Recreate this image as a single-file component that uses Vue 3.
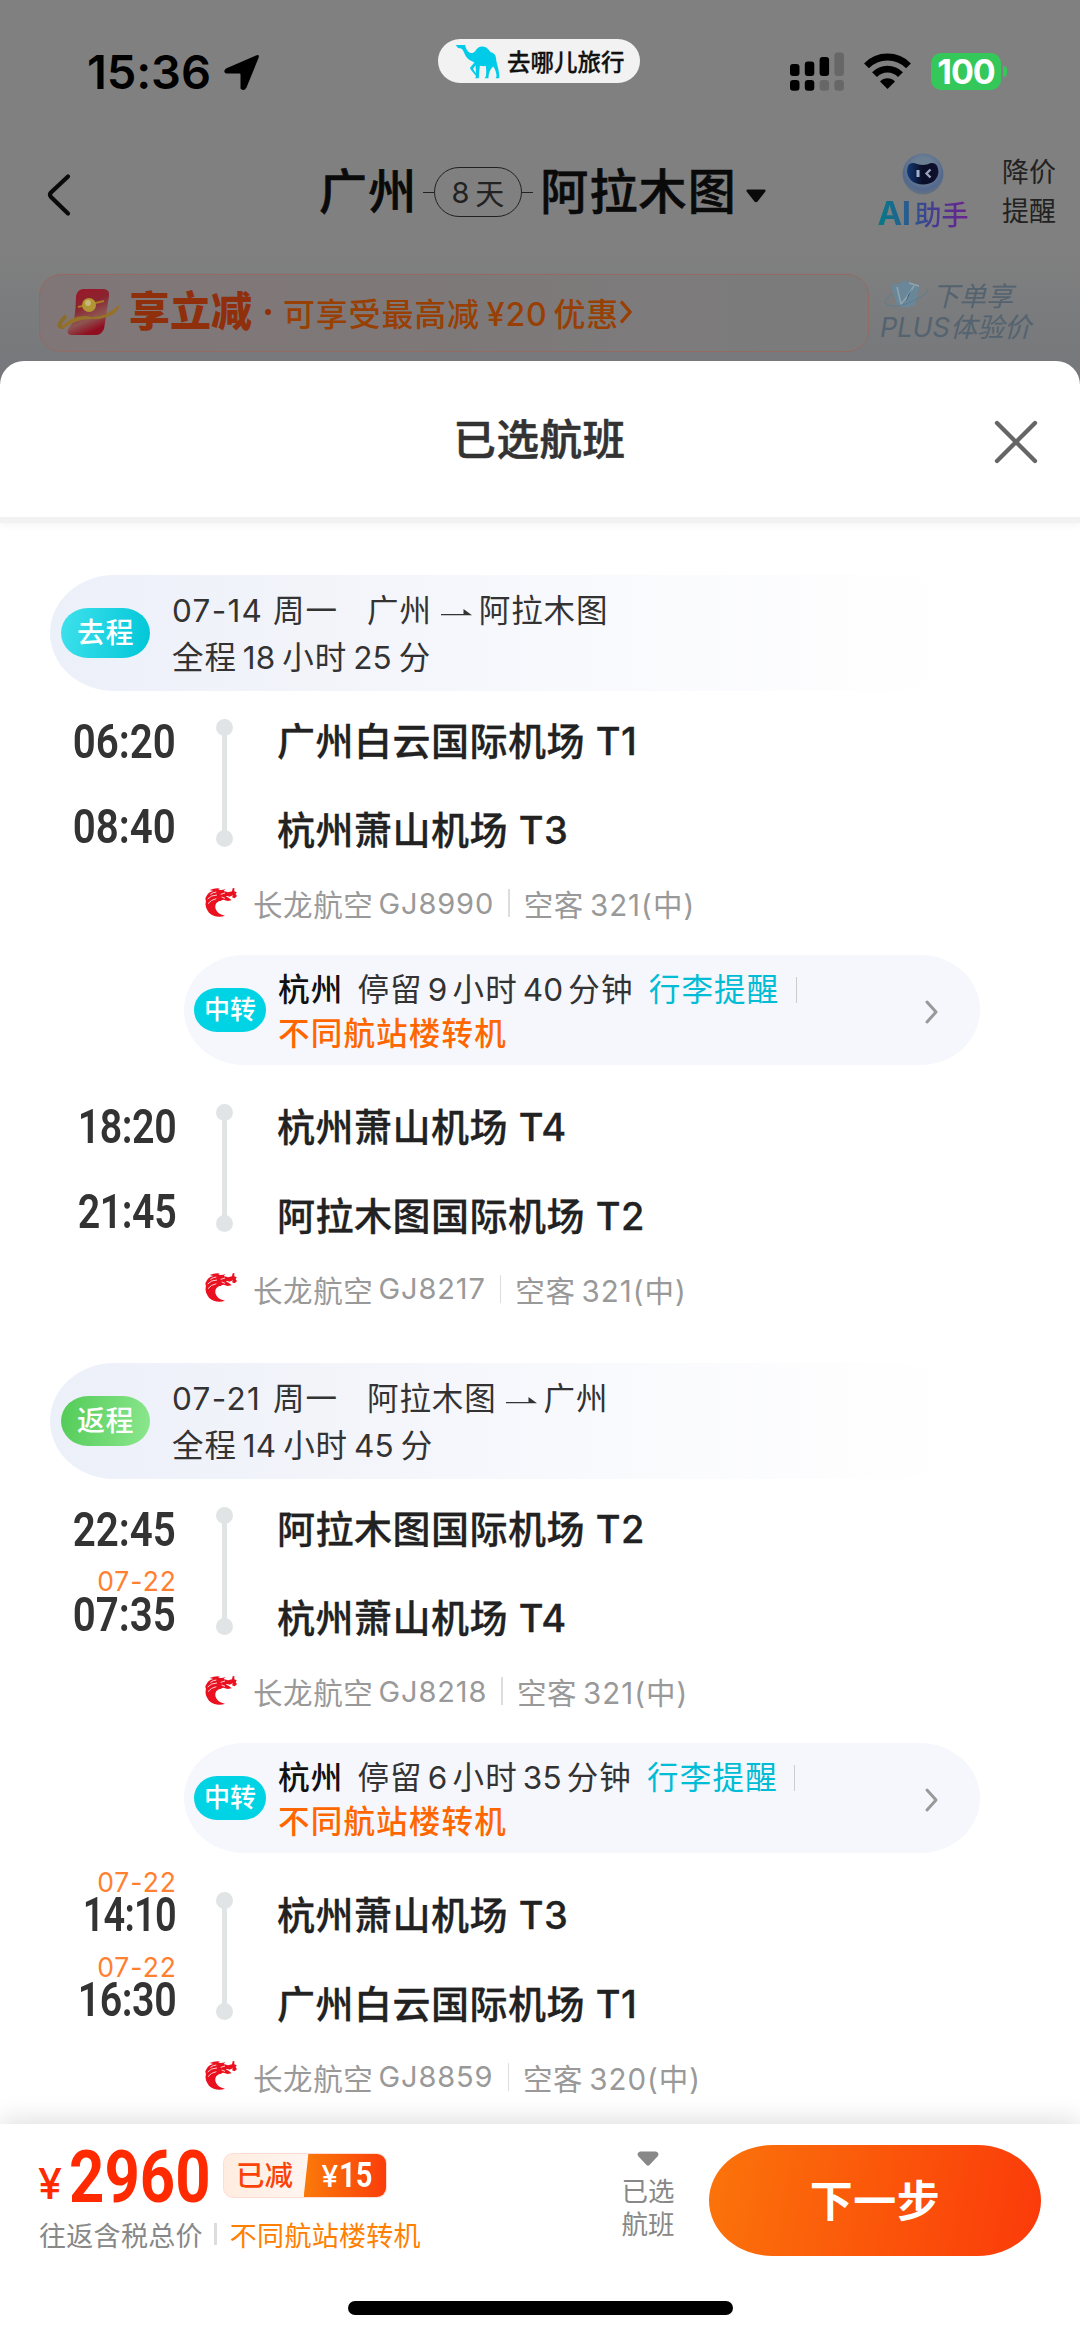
<script setup>
const trips = [
  {
    kind: 'go', tag: '去程', date: '07-14', day: '周一', from: '广州', to: '阿拉木图', h: '18', m: '25',
    legs: [
      {
        times: [{ t: '06:20' }, { t: '08:40' }], airports: ['广州白云国际机场 T1', '杭州萧山机场 T3'],
        flight: 'GJ8990', plane: '321', transfer: { h: '9', m: '40' },
      },
      {
        times: [{ t: '18:20' }, { t: '21:45' }], airports: ['杭州萧山机场 T4', '阿拉木图国际机场 T2'],
        flight: 'GJ8217', plane: '321',
      },
    ],
  },
  {
    kind: 'back', tag: '返程', date: '07-21', day: '周一', from: '阿拉木图', to: '广州', h: '14', m: '45',
    legs: [
      {
        times: [{ t: '22:45' }, { t: '07:35', d: '07-22' }], airports: ['阿拉木图国际机场 T2', '杭州萧山机场 T4'],
        flight: 'GJ8218', plane: '321', transfer: { h: '6', m: '35' },
      },
      {
        times: [{ t: '14:10', d: '07-22' }, { t: '16:30', d: '07-22' }], airports: ['杭州萧山机场 T3', '广州白云国际机场 T1'],
        flight: 'GJ8859', plane: '320',
      },
    ],
  },
]

const ones = (t) => 'ones' + (t.split('1').length - 1)
</script>

<template>
  <div class="page">
    <header class="backdrop">
      <div class="status">
        <span class="clock">15:36</span>
        <svg class="loc" viewBox="0 0 36 37"><path d="M32 1.500Q36 0 34.500 4L22.500 33.500Q20 38 16.500 34.500V20.500Q16.500 19.500 15.500 19.500L2 19.500Q-1.500 17.500 2 14.500Z" /></svg>
        <div class="brand">
          <svg viewBox="0 0 132 106" preserveAspectRatio="none"><path fill="#00cbe8" fill-rule="evenodd" d="M2 3H30L31 9C36 26 50 33 59 22C67 8 76 6 84 8C96 10 99 18 104 24C117 28 121 36 121 50C124 66 130 78 130 104H119L122 98C121 84 118 76 112 68C104 76 99 84 98 104H87L91 97C92 86 92 76 90 66C84 68 78 67 73 66C72 78 70 90 70 104H59L62 98L46 77L44 72L57 56C46 50 36 46 30 34C26 26 24 17 18 14L9 12ZM53 76L60 64L62 90Z" /></svg>
          <span>去哪儿旅行</span>
        </div>
        <svg class="signal" viewBox="0 0 54 39">
          <g fill="#000"><rect x="0" y="12" width="9.500" height="12" rx="3" /><rect x="14.800" y="9.500" width="9.500" height="14.500" rx="3" /><rect x="29.600" y="5" width="9.500" height="19" rx="3" /><rect x="0" y="28" width="9.500" height="10.700" rx="3.200" /><rect x="14.800" y="28" width="9.500" height="10.700" rx="3.200" /></g>
          <g fill="#676767"><rect x="44.400" y="0.500" width="9.500" height="23.500" rx="3" /><rect x="29.600" y="28" width="9.500" height="10.700" rx="3.200" /><rect x="44.400" y="28" width="9.500" height="10.700" rx="3.200" /></g>
        </svg>
        <svg class="wifi" viewBox="0 0 47 35"><path d="M2.500 11.800A29.500 29.500 0 0 1 44.500 11.800M10.500 20.700A18 18 0 0 1 36.500 20.700" fill="none" stroke="#000" stroke-width="6.800" /><path d="M23.500 35L16 27.500A10.500 10.500 0 0 1 31 27.500Z" /></svg>
        <div class="battery">100</div>
        <i class="nub"></i>
      </div>

      <div class="nav">
        <svg class="back" viewBox="0 0 24 42"><path d="M21 2.500L4 18.500Q2 20.800 4 23L21 39.500" fill="none" stroke="#0a0a0a" stroke-width="4.200" stroke-linecap="round" /></svg>
        <div class="route">
          <span class="city c1">广州</span>
          <i class="dash"></i><span class="days"><span>8</span>天</span><i class="dash"></i>
          <span class="city c2">阿拉木图</span>
          <svg class="caret" viewBox="0 0 20 14"><path d="M1.500 0.500H18.500Q20.500 1 19 3L11.500 12.500Q10 14 8.500 12.500L1 3Q-0.500 1 1.500 0.500Z" fill="#0a0a0a" /></svg>
        </div>
        <div class="ai">
          <svg viewBox="0 0 42 44">
            <defs><radialGradient id="orb" cx=".5" cy=".38" r=".62"><stop offset=".45" stop-color="#6b7f93" /><stop offset=".8" stop-color="#54688e" /><stop offset="1" stop-color="#64747f" /></radialGradient><linearGradient id="visor"><stop offset="0" stop-color="#143a74" /><stop offset=".5" stop-color="#0a0d27" /><stop offset="1" stop-color="#10112c" /></linearGradient></defs>
            <circle cx="21" cy="22" r="20.500" fill="url(#orb)" />
            <path d="M12 11Q17 13 21 13Q25 13 29 11Q36 10 36.500 20Q35 32 21 32.500Q7 32 5 20Q5 10 12 11Z" fill="url(#visor)" />
            <path d="M16 18V25" stroke="#9db4cb" stroke-width="3" /><path d="M28.500 17.500L24.500 21.500L28.500 25.500" fill="none" stroke="#9aa4bd" stroke-width="2.300" />
          </svg>
          <span><b>AI</b>助手</span>
        </div>
        <div class="alert"><span>降价</span><span>提醒</span></div>
      </div>

      <div class="promos">
        <div class="coupon">
          <svg class="packet" viewBox="0 0 62 48">
            <defs><linearGradient id="red" x1="0" y1="0" x2=".4" y2="1"><stop offset="0" stop-color="#a01525" /><stop offset=".45" stop-color="#8a2430" /><stop offset=".75" stop-color="#8d5552" /><stop offset="1" stop-color="#900e20" /></linearGradient></defs>
            <path d="M8 28Q-4 40 6 39" fill="none" stroke="#8a6c2c" stroke-width="4" />
            <path d="M25 1H46Q52 2 51 8L46 41Q43 47 38 47H13Q8 46 10 41L16 33Q18 20 18 8Q19 2 25 1Z" fill="url(#red)" />
            <path d="M3 39Q16 25 34 29Q48 29 61 17Q62 22 54 27Q44 32 34 31Q18 31 6 40Z" fill="#96712a" />
            <path d="M20 19L46 13" stroke="#a87c22" stroke-width="2" /><circle cx="31" cy="17" r="7" fill="#b29634" /><circle cx="30" cy="15" r="3" fill="#c5b978" />
          </svg>
          <b>享立减</b><i class="pt"></i>
          <span class="deal">可享受最高减<em>¥20</em>优惠</span>
          <svg class="chev" viewBox="0 0 14 24"><path d="M2 1.500L11 12L2 22.500" fill="none" stroke="#983f04" stroke-width="3.400" /></svg>
        </div>
        <div class="plus">
          <div class="p1">
            <svg viewBox="0 0 46 28"><path d="M8 5L18 3L22 0L28 3L37 6L32 25L22 28L14 25Z" fill="#698799" /><path d="M14 7L18 24L23 18L31 6M26 3L36 6" fill="none" stroke="#91a4ae" stroke-width="1.500" /><path d="M25 15L23 22L29 9Z" fill="#365f82" /><path d="M9 14Q-2 21 4 25Q14 29 32 20Q48 12 44 9" fill="none" stroke="#5c7c90" stroke-width="1" /></svg>
            <span>下单享</span>
          </div>
          <span class="p2">PLUS体验价</span>
        </div>
      </div>
    </header>

    <main class="sheet">
      <div class="head">
        <h1>已选航班</h1>
        <svg class="close" viewBox="0 0 44 44"><path d="M3 3L41 41M41 3L3 41" stroke="#666" stroke-width="4.300" stroke-linecap="round" /></svg>
      </div>
      <div class="list">
        <section v-for="trip in trips" :key="trip.kind" class="trip">
          <div class="strip">
            <span class="tag" :class="trip.kind">{{ trip.tag }}</span>
            <div class="sum">
              <div class="ln"><span class="date">{{ trip.date }}</span><span class="day">{{ trip.day }}</span><span>{{ trip.from }}</span><svg class="arr" viewBox="0 0 31 8"><path d="M0 6.200H31L22.500 0V5H0Z" fill="#333" /></svg><span>{{ trip.to }}</span></div>
              <div class="ln">全程<em>{{ trip.h }}</em>小时<em>{{ trip.m }}</em>分</div>
            </div>
          </div>
          <div v-for="leg in trip.legs" :key="leg.flight" class="leg">
            <div class="stops">
              <div class="times">
                <div v-for="s in leg.times" :key="s.t" class="time"><span v-if="s.d" class="next">{{ s.d }}</span><span class="hm" :class="ones(s.t)">{{ s.t }}</span></div>
              </div>
              <div class="rail"><i></i><u></u><i></i></div>
              <div class="ports"><div v-for="a in leg.airports" :key="a">{{ a }}</div></div>
            </div>
            <div class="airline">
              <svg viewBox="0 0 96 90">
                <path fill="#ea1020" d="M2 46C8 30 24 28 40 30C54 33 52 43 44 42C33 45 29 55 32 66C36 77 46 84 60 86C46 92 24 90 12 77C4 67 0 56 2 46Z" />
                <path fill="#ea1020" d="M1 34Q8 15 25 12L14 9Q32 2 45 5L40 8Q50 11 61 6L56 12L69 16L81 13L83 4L88 3L88 13L95 16L92 22L96 27L89 34L81 31L84 25L73 29L68 27L62 28L72 33L80 40L68 42L55 38L48 40L43 32L25 31Q12 34 3 44Z" />
                <path d="M8 36Q18 24 36 24M16 22Q24 16 34 15M9 50Q18 38 34 35M47 22L60 18M50 30L60 34" stroke="#fff" stroke-width="2.400" fill="none" />
              </svg>
              <span>长龙航空</span><span class="no">{{ leg.flight }}</span><i></i><span>空客</span><span class="pl">{{ leg.plane }}(中)</span>
            </div>
            <div v-if="leg.transfer" class="transfer">
              <span class="mid">中转</span>
              <div class="info">
                <div class="ln"><b>杭州</b>停留<em>{{ leg.transfer.h }}</em>小时<em>{{ leg.transfer.m }}</em>分钟<span class="bag">行李提醒</span><i></i></div>
                <div class="ln warn">不同航站楼转机</div>
              </div>
              <svg class="more" viewBox="0 0 13 24"><path d="M2 2L11 12L2 22" fill="none" stroke="#999" stroke-width="3" stroke-linecap="round" stroke-linejoin="round" /></svg>
            </div>
          </div>
        </section>
      </div>
      <footer class="bar">
        <div class="pay">
          <div class="price">
            <span class="yen">¥</span><span class="amt"><span>2960</span></span>
            <div class="off"><span class="l">已减</span><span class="r"><span>¥</span><b>15</b></span></div>
          </div>
          <div class="note"><span>往返含税总价</span><i></i><span class="w">不同航站楼转机</span></div>
        </div>
        <div class="picked">
          <svg viewBox="0 0 22 16"><path d="M3 0.500H19Q23 2 20.500 5.500L12.500 14Q11 15.500 9.500 14L1.500 5.500Q-1 2 3 0.500Z" fill="#888" /></svg>
          <span>已选</span><span>航班</span>
        </div>
        <button class="next-btn">下一步</button>
        <i class="home"></i>
      </footer>
    </main>
  </div>
</template>

<style>
body { margin: 0; background: #fff; }
</style>

<style scoped>
.page, .page * { box-sizing: border-box; }
.page { width: 1080px; height: 2337px; overflow: hidden; background: linear-gradient(#808080 0, #808080 250px, #76787b 362px, #76787b 400px); font-family: Inter, "Noto Sans CJK SC", sans-serif; }
.page svg { display: block; flex: none; overflow: visible; }
i, em { font-style: normal; }
.backdrop { height: 361px; display: flex; flex-direction: column; }

.status { height: 144px; display: flex; align-items: flex-start; padding-left: 87px; }
.clock { width: 124px; font-size: 47px; line-height: 52px; margin-top: 46px; font-weight: 600; letter-spacing: -.1px; color: #000; white-space: nowrap; }
.loc { width: 36px; height: 37px; margin: 54px 0 0 13px; }
.brand { width: 202px; height: 44px; margin: 39px 0 0 178px; border-radius: 22px; background: #f2f2f2; display: flex; align-items: center; padding-left: 17px; gap: 7px; font-size: 23.500px; font-weight: 500; -webkit-text-stroke: .3px #111; color: #111; white-space: nowrap; }
.brand svg { width: 45px; height: 35px; }
.signal { width: 54px; height: 39px; margin: 52px 0 0 150px; }
.wifi { width: 47px; height: 35px; margin: 54px 0 0 20px; }
.battery { width: 70px; height: 37px; margin: 53px 0 0 20px; border-radius: 10px; background: #34c759; color: #fff; font-size: 34px; line-height: 37px; font-weight: 700; text-align: center; letter-spacing: -1px; }
.nub { width: 4px; height: 11px; margin: 66px 0 0 2px; background: #34c759; border-radius: 0 5px 5px 0; }

.nav { height: 96px; display: flex; align-items: center; }
.back { width: 24px; height: 42px; margin-left: 47px; margin-top: 5px; }
.route { display: flex; align-items: center; margin-left: 248px; width: 447px; color: #0a0a0a; }
.city { font-size: 48px; letter-spacing: 1.200px; line-height: 60px; white-space: nowrap; font-weight: 500; -webkit-text-stroke: .6px #0a0a0a; }
.c1 { width: 104px; }
.c2 { width: 197px; margin-left: 7px; }
.dash { width: 11px; height: 1px; background: #222; }
.days { width: 89px; height: 50px; border: 1.500px solid #222; border-radius: 25px; font-size: 29px; color: #222; display: flex; align-items: center; justify-content: center; gap: 6px; }
.caret { width: 20px; height: 14px; margin: 7px 0 0 9px; }
.ai { width: 92px; margin-left: 111px; display: flex; flex-direction: column; align-items: center; height: 80px; }
.ai svg { width: 42px; height: 44px; }
.ai span { font-size: 27px; line-height: 30px; margin-top: 2px; font-weight: 500; white-space: nowrap; background: linear-gradient(90deg, #057a88, #2a5a90 35%, #433d90 60%, #6c2090); -webkit-background-clip: text; background-clip: text; color: transparent; }
.ai b { font-size: 33px; line-height: 30px; margin-right: 4px; letter-spacing: -.5px; }
.alert { margin-left: 33px; display: flex; flex-direction: column; font-size: 27px; line-height: 39px; color: #222; white-space: nowrap; }

.promos { display: flex; margin: 34px 0 0 39px; }
.coupon { width: 830px; height: 78px; border: 1.500px solid #936b62; border-radius: 22px; background: linear-gradient(90deg, #807678, #7e7878 45%, #7d7b7c 75%, #7b7b7c); display: flex; align-items: center; padding: 0 0 2px 18px; color: #983f04; }
.packet { width: 62px; height: 48px; }
.coupon b { font-size: 41px; line-height: 50px; margin: -2px 0 0 9px; width: 124px; white-space: nowrap; color: #8f2f0c; font-weight: 900; }
.pt { width: 6px; height: 6px; border-radius: 3px; background: #8f2f0c; margin: 0 12px; }
.deal { font-size: 32px; letter-spacing: .8px; font-weight: 500; white-space: nowrap; }
.deal em { margin: 0 6px 0 7px; }
.chev { width: 14px; height: 24px; }
.plus { margin-left: 14px; color: #54636f; font-size: 27px; white-space: nowrap; padding-top: 3px; }
.p1 { display: flex; align-items: center; height: 34px; }
.p1 svg { width: 46px; height: 28px; }
.p1 span, .p2 { font-style: italic; }
.p1 span { margin-left: 3px; }
.p2 { display: block; line-height: 34px; margin-left: -3px; }

.sheet { height: 1976px; border-radius: 24px 24px 0 0; background: #fff; overflow: hidden; display: flex; flex-direction: column; }
.head { height: 162px; flex: none; border-bottom: 6px solid #f2f2f2; display: flex; justify-content: flex-end; align-items: center; padding-right: 42px; box-shadow: 0 3px 7px rgba(0, 0, 0, .04); }
.head h1 { flex: 1; margin: 2px 0 0; padding-left: 42px; text-align: center; font-size: 42.500px; line-height: 60px; font-weight: 500; -webkit-text-stroke: .6px #333; color: #333; letter-spacing: .6px; text-indent: 43px; }
.close { width: 44px; height: 44px; margin-top: 6px; }
.list { height: 1601px; flex: none; padding-top: 52px; }
.trip { height: 788px; }
.strip { margin-left: 50px; width: 910px; height: 116px; border-radius: 64px / 58px; background: linear-gradient(90deg, #ecf0f9, #f2f4fa 28%, #f8f9fd 55%, #fdfdfe 85%, #fff); display: flex; align-items: center; padding-left: 11px; }
.tag { width: 89px; height: 50px; border-radius: 27px / 25px; color: #fff; font-size: 28px; letter-spacing: .5px; line-height: 50px; text-align: center; font-weight: 500; }
.go.tag { background: linear-gradient(100deg, #3fe1ec, #00c6d8); }
.back.tag { margin: 0; background: linear-gradient(100deg, #52cb57, #8ce78e); }
.sum { margin: 2px 0 0 22px; color: #333; font-size: 31.500px; letter-spacing: .9px; }
.ln { height: 47px; line-height: 47px; display: flex; align-items: center; white-space: nowrap; }
.date { width: 101px; letter-spacing: 1.300px; }
.day { width: 94px; }
.arr { width: 31px; height: 8px; margin: 4px 7px 0 9px; }
.ln em { margin: 0 7px 0 6px; letter-spacing: .1px; }
.leg { padding-top: 5px; height: 385.500px; }
.stops { display: flex; height: 178px; }
.times { width: 176px; padding-top: 3px; }
.time { height: 85px; position: relative; display: flex; align-items: center; justify-content: flex-end; }
.hm { font-family: Roboto, sans-serif; font-size: 48px; line-height: 38px; font-weight: 600; color: #333; transform: scaleX(.84); transform-origin: right; }
.hm.ones1 { letter-spacing: -.5px; transform: scaleX(.82); }
.hm.ones2 { letter-spacing: -1px; transform: scaleX(.79); }
.next { position: absolute; right: -1px; top: -1px; line-height: 20px; font-size: 26.500px; color: #ff8030; letter-spacing: 1px; }
.rail { width: 17px; margin-left: 40px; padding: 22.500px 0 0; display: flex; flex-direction: column; align-items: center; }
.rail i { width: 17px; height: 17px; border-radius: 50%; background: #e0e4e5; }
.rail u { width: 5.500px; height: 96px; margin: -1px 0; background: #e0e4e5; }
.ports { margin: 1px 0 0 44px; font-size: 38px; letter-spacing: .5px; font-weight: 500; color: #222; -webkit-text-stroke: .3px #222; }
.ports div { height: 89px; line-height: 89px; white-space: nowrap; }
.airline { margin-top: 9px; height: 40px; padding-left: 205px; display: flex; align-items: center; color: #999; font-size: 29.500px; letter-spacing: .6px; white-space: nowrap; }
.airline svg { width: 32px; height: 30px; margin-right: 16px; margin-top: -3px; }
.airline i { width: 1.500px; height: 28px; background: #ddd; margin: 0 14px; }
.no { margin-left: 5px; font-size: 29px; letter-spacing: .9px; }
.pl { margin-left: 6px; font-size: 29.500px; letter-spacing: 1px; }
.transfer { margin: 32px 0 0 184px; width: 796px; height: 110px; border-radius: 60px / 55px; background: #f6f7fc; display: flex; align-items: center; padding-left: 10px; }
.mid { width: 72px; height: 44px; border-radius: 23px / 22px; background: #00d4e4; color: #fff; font-size: 26px; font-weight: 500; line-height: 43px; text-align: center; }
.info { margin: 3px 0 0 12px; width: 647px; color: #333; font-size: 31.500px; letter-spacing: 1.200px; }
.info .ln { height: 44px; line-height: 44px; }
.info b { color: #111; font-weight: 500; margin-right: 14px; }
.info em { margin: 0 5px 0 5px; }
.bag { color: #00bcd4; margin-left: 15px; }
.info i { width: 1.500px; height: 26px; background: #ccc; margin-left: 16px; }
.info .warn { color: #ff6600; font-weight: 500; }
.more { width: 13px; height: 24px; margin-top: 3px; }

.bar { height: 213px; flex: none; background: #fff; box-shadow: 0 -4px 24px rgba(0, 0, 0, .13); position: relative; display: flex; align-items: flex-start; padding-left: 38px; }
.pay { width: 578px; padding-top: 20px; }
.price { display: flex; height: 70px; align-items: center; color: #ff2a00; }
.yen { font-size: 43px; line-height: 42px; width: 31px; font-weight: 500; margin-top: 7px; }
.amt { width: 154px; height: 70px; font-family: Roboto, sans-serif; font-size: 73px; line-height: 66px; font-weight: 700; }
.amt span { display: inline-block; transform: scaleX(.845); transform-origin: left; }
.off { width: 164px; height: 45px; margin-top: -7px; border-radius: 10px; border: 1.500px solid #ffdcd2; background: linear-gradient(90deg, #ffece0, #fff); display: flex; overflow: hidden; }
.off .l { width: 81px; text-align: center; font-size: 28.500px; line-height: 44px; font-weight: 500; color: #fb4208; white-space: nowrap; }
.off .r { flex: 1; margin: -1.500px; background: linear-gradient(90deg, #fa7a0a, #fb3c0a); clip-path: polygon(6% 0, 100% 0, 100% 100%, 0 100%); color: #fff; display: flex; align-items: center; padding-left: 18px; font-size: 30px; font-weight: 500; }
.off .r b { font-family: Roboto, sans-serif; font-size: 35px; transform: scaleX(.83); transform-origin: left; font-weight: 700; margin-left: 1px; }
.note { display: flex; align-items: center; height: 40px; padding-left: 1px; font-size: 27px; letter-spacing: .3px; color: #888; white-space: nowrap; }
.note i { width: 3px; height: 22px; background: #ddd; margin: 0 13px 0 11px; }
.note .w { color: #ff8000; }
.picked { width: 64px; display: flex; flex-direction: column; align-items: center; padding-top: 27px; font-size: 26.500px; line-height: 33px; color: #888; white-space: nowrap; }
.picked svg { width: 22px; height: 16px; margin-bottom: 8px; }
.next-btn { width: 332px; height: 111px; margin: 21px 0 0 29px; padding: 0 0 5px; border: 0; border-radius: 64px / 56px; background: linear-gradient(100deg, #fb740a, #fb3a0a); color: #fff; font: 600 43px Inter, "Noto Sans CJK SC", sans-serif; letter-spacing: .5px; }
.home { position: absolute; left: 348px; top: 177px; width: 385px; height: 14px; border-radius: 7px; background: #000; }
</style>
